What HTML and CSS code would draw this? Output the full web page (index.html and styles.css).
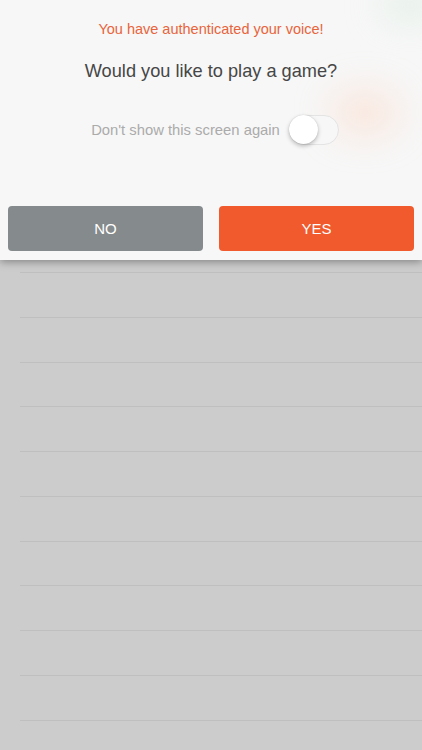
FILE: index.html
```html
<!DOCTYPE html>
<html>
<head>
<meta charset="utf-8">
<link rel="stylesheet" href="styles.css">
</head>
<body>
<div class="panel">
  <div class="glow glow-orange"></div>
  <div class="glow glow-green"></div>
  <p class="auth">You have authenticated your voice!</p>
  <p class="question">Would you like to play a game?</p>
  <div class="toggle-row">
    <span class="toggle-label">Don't show this screen again</span>
    <span class="toggle"><span class="knob"></span></span>
  </div>
  <div class="buttons">
    <button class="btn btn-no">NO</button>
    <button class="btn btn-yes">YES</button>
  </div>
</div>
<div class="list">
  <div class="row"></div><div class="row"></div><div class="row"></div>
  <div class="row"></div><div class="row"></div><div class="row"></div>
  <div class="row"></div><div class="row"></div><div class="row"></div>
  <div class="row"></div><div class="row"></div>
</div>
</body>
</html>
```
FILE: styles.css
```css
html, body {
  margin: 0;
  padding: 0;
  background: #cccccc;
  height: 750px;
  overflow: hidden;
  font-family: "Liberation Sans", Arial, sans-serif;
}
.panel {
  position: relative;
  z-index: 2;
  height: 260px;
  box-sizing: border-box;
  background: #f7f7f7;
  box-shadow: 0 2px 8px rgba(0,0,0,0.35);
  display: flex;
  flex-direction: column;
  align-items: center;
  overflow: hidden;
}
.glow {
  position: absolute;
  border-radius: 50%;
  filter: blur(18px);
  pointer-events: none;
}
.glow-orange {
  width: 70px;
  height: 45px;
  left: 330px;
  top: 90px;
  background: rgba(255, 205, 180, 0.4);
}
.glow-green {
  width: 60px;
  height: 30px;
  left: 380px;
  top: -10px;
  background: rgba(200, 230, 210, 0.45);
}
.auth {
  margin: 20px 0 0;
  font-size: 14.5px;
  color: #e8643c;
  line-height: 18px;
  position: relative;
}
.question {
  margin: 22px 0 0;
  font-size: 18.2px;
  color: #464646;
  line-height: 22px;
  position: relative;
}
.toggle-row {
  margin-top: 33px;
  display: flex;
  align-items: center;
  gap: 9px;
  position: relative;
  margin-left: 8px;
}
.toggle-label {
  font-size: 14.8px;
  color: #ababab;
}
.toggle {
  width: 50px;
  height: 30px;
  box-sizing: border-box;
  border: 1.5px solid #e4e4e4;
  border-radius: 15px;
  background: #f7f7f7;
  position: relative;
}
.knob {
  position: absolute;
  left: -1px;
  top: -1px;
  width: 29px;
  height: 29px;
  border-radius: 50%;
  background: #fff;
  box-shadow: 0 2px 4px rgba(0,0,0,0.25), 0 0 1px rgba(0,0,0,0.2);
}
.buttons {
  margin-top: auto;
  margin-bottom: 9px;
  display: flex;
  gap: 16px;
  width: 100%;
  box-sizing: border-box;
  padding: 0 8px 0 8px;
  position: relative;
}
.btn {
  flex: 1;
  height: 45px;
  border: none;
  border-radius: 4px;
  color: #fff;
  font-family: "Liberation Sans", Arial, sans-serif;
  font-size: 15px;
  padding: 0;
}
.btn-no { background: #858a8c; }
.btn-yes { background: #f05a2c; }
.list {
  padding-left: 20px;
  padding-top: 12px;
}
.row {
  height: 44.75px;
  box-sizing: border-box;
  border-top: 1.5px solid #bfbfbf;
}
```
